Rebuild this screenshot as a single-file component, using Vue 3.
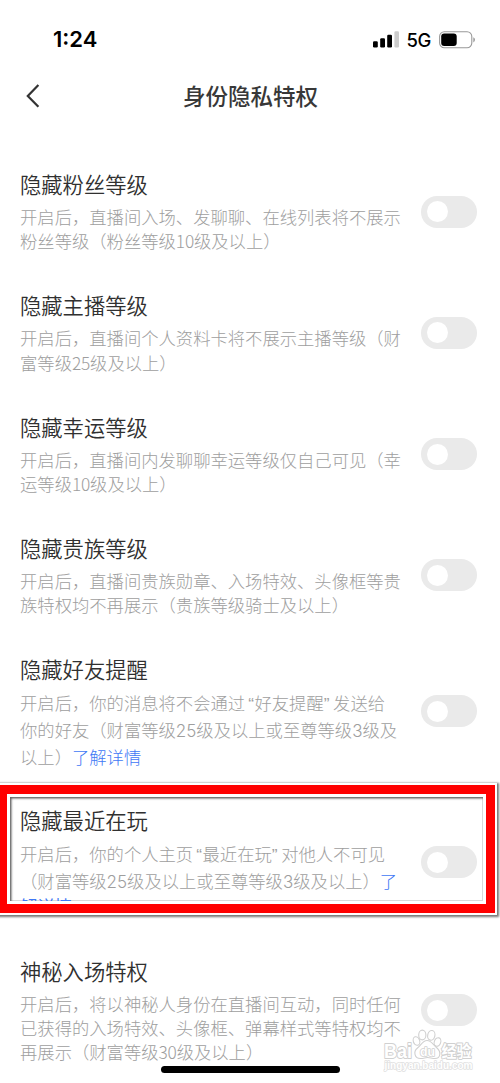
<script setup>
const rows = [
  { title: '隐藏粉丝等级', lines: ['开启后，直播间入场、发聊聊、在线列表将不展示', '粉丝等级（粉丝等级10级及以上）'] },
  { title: '隐藏主播等级', lines: ['开启后，直播间个人资料卡将不展示主播等级（财', '富等级25级及以上）'] },
  { title: '隐藏幸运等级', lines: ['开启后，直播间内发聊聊幸运等级仅自己可见（幸', '运等级10级及以上）'] },
  { title: '隐藏贵族等级', lines: ['开启后，直播间贵族勋章、入场特效、头像框等贵', '族特权均不再展示（贵族等级骑士及以上）'] },
  { title: '隐藏好友提醒', loose: true, lines: ['开启后，你的消息将不会通过“好友提醒”发送给', '你的好友（财富等级25级及以上或至尊等级3级及', '以上）'], links: { 2: '了解详情' } },
  { title: '隐藏最近在玩', loose: true, marked: true, lines: ['开启后，你的个人主页“最近在玩”对他人不可见', '（财富等级25级及以上或至尊等级3级及以上）', ''], links: { 1: '了', 2: '解详情' } },
  { title: '神秘入场特权', last: true, lines: ['开启后，将以神秘人身份在直播间互动，同时任何', '已获得的入场特效、头像框、弹幕样式等特权均不', '再展示（财富等级30级及以上）'] },
]

const kindOf = (text) => {
  if (/\d/.test(text)) return 'num'
  if (text === '“') return 'open'
  if (text === '”') return 'close'
  return 'han'
}
const split = (line) =>
  line.split(/(\d+|[“”])/).filter(Boolean).map((text) => ({ text, kind: kindOf(text) }))
</script>

<template>
  <main class="screen">
    <header class="status">
      <span class="time">1:24</span>
      <div class="signals">
        <svg width="27" height="18" viewBox="0 0 27 18">
          <rect x="0" y="10.2" width="4.8" height="6.3" rx="1.2" />
          <rect x="7.2" y="7.2" width="4.8" height="9.3" rx="1.2" />
          <rect x="14.2" y="3.8" width="4.8" height="12.7" rx="1.2" />
          <rect x="21.4" y="0.2" width="4.6" height="16.3" rx="1.2" fill="#ccc" />
        </svg>
        <span class="net">5G</span>
        <svg width="37" height="18" viewBox="0 0 37 18">
          <rect x="0.6" y="0.7" width="32.2" height="16.1" rx="4.7" fill="none" stroke="#999" stroke-width="1.1" />
          <rect x="2.2" y="2.4" width="15.5" height="12.6" rx="3" />
          <path d="M34.3 6.2 Q36 7 36 8.8 Q36 10.6 34.3 11.4Z" fill="#999" />
        </svg>
      </div>
    </header>

    <nav class="nav">
      <svg class="back" width="16" height="26" viewBox="0 0 16 26">
        <path d="M13.4 2 L2.8 12.9 L13.4 23.8" fill="none" stroke="#333" stroke-width="2.2" />
      </svg>
      <h1>身份隐私特权</h1>
    </nav>

    <section class="list">
      <div v-for="row in rows" :key="row.title" class="row" :class="{ loose: row.loose, last: row.last, marked: row.marked }">
        <div class="copy">
          <h2>{{ row.title }}</h2>
          <p>
            <span v-for="(line, i) in row.lines" :key="i" class="line"><span v-for="(t, k) in split(line)" :key="k" :class="t.kind">{{ t.text }}</span><a v-if="row.links && row.links[i]">{{ row.links[i] }}</a></span>
          </p>
        </div>
        <i class="toggle"><b></b></i>
        <div v-if="row.marked" class="frame"></div>
      </div>
    </section>

    <svg class="watermark" width="94" height="46" viewBox="0 0 94 46">
      <g fill="#fff" stroke="#d0d0d0" stroke-width="1.1">
        <ellipse cx="33.5" cy="12" rx="3.2" ry="4.4" transform="rotate(-18 33.5 12)" />
        <ellipse cx="39.3" cy="6" rx="3.6" ry="4.9" />
        <ellipse cx="48.3" cy="6.3" rx="3.6" ry="4.9" transform="rotate(12 48.3 6.3)" />
        <ellipse cx="54.5" cy="13" rx="3.2" ry="4.4" transform="rotate(20 54.5 13)" />
        <path d="M44 11.5 C39.5 11.5 38 16.5 34.5 19 C30 22.5 31.5 29.5 37.5 29.5 C41 29.5 42 28.5 44.5 28.5 C47 28.5 49 29.5 52 29.5 C57.5 29.5 58.5 23 54 19 C50.5 16 48.5 11.5 44 11.5Z" />
      </g>
      <g fill="#fff" stroke="#d0d0d0" stroke-width="2" paint-order="stroke" stroke-linejoin="round" font-family="'Liberation Sans', 'Noto Sans CJK SC', sans-serif" font-weight="700">
        <text x="1" y="28.5" font-size="20" textLength="28" lengthAdjust="spacingAndGlyphs">Bai</text>
        <text x="37" y="26.5" font-size="13" stroke-width="1.6" textLength="15" lengthAdjust="spacingAndGlyphs">du</text>
        <text x="58.5" y="27.5" font-size="16" textLength="30" lengthAdjust="spacingAndGlyphs">经验</text>
        <text x="1.5" y="40" font-size="10.5" stroke="#e0e0e0" stroke-width="1.6" textLength="88" lengthAdjust="spacingAndGlyphs">jingyan.baidu.com</text>
      </g>
    </svg>
    <div class="home"></div>
  </main>
</template>

<style>
body { margin: 0; background: #fff; }
</style>

<style scoped>
.screen {
  position: relative;
  width: 500px;
  height: 1083px;
  overflow: hidden;
  background: #fff;
  box-sizing: border-box;
  font-family: "Noto Sans CJK SC", sans-serif;
}
.status {
  height: 70px;
  padding: 9px 24px 0 53px;
  box-sizing: border-box;
  display: flex;
  justify-content: space-between;
}
.time {
  font: 600 22px/61px Inter, sans-serif;
}
.signals { display: flex; height: 61px; align-items: center; }
.net { font: 500 18.5px/61px Inter, sans-serif; margin: 1px 8px 0 6.5px; letter-spacing: -0.4px; }
.nav {
  position: relative;
  height: 50px;
  display: flex;
  justify-content: center;
  align-items: center;
}
.back { position: absolute; left: 25px; top: 13px; }
h1 {
  margin: 0 0 0 1px;
  color: #383838;
  font: 500 22.5px/32px "Noto Sans CJK SC", sans-serif;
}
.list { padding: 49px 23px 0 20px; }
.row {
  position: relative;
  height: 85px;
  margin-bottom: 36.3px;
  display: flex;
  justify-content: space-between;
  align-items: center;
}
.loose { height: 114.4px; }
.last { height: 109px; }
.copy { width: 390px; height: 100%; }
h2 {
  margin: 0;
  color: #303030;
  font: 350 21.3px/30px "Noto Sans CJK SC", sans-serif;
}
p {
  margin: 6.2px 0 0;
  color: #9e9e9e;
  font-size: 17.32px;
  font-weight: 300;
}
.line { display: block; height: 24.3px; line-height: 24.3px; white-space: nowrap; }
.num { letter-spacing: -0.2px; }
.loose .num { font-family: Inter, sans-serif; font-size: 17px; letter-spacing: 0; }
.open, .close { font-family: "Liberation Sans", sans-serif; }
.open { margin-left: 3.2px; letter-spacing: 0.4px; }
.close { letter-spacing: 3.6px; }
.loose p { margin-top: 6px; }
.loose .line { height: 26.8px; line-height: 26.8px; }
a { color: #3f78f5; }
.toggle {
  flex: none;
  width: 56px;
  height: 32px;
  box-sizing: border-box;
  padding: 5.5px;
  border-radius: 16px;
  background: #eaeaea;
}
.toggle b {
  display: block;
  width: 21px;
  height: 21px;
  border-radius: 50%;
  background: #fff;
}
.marked .copy {
  position: relative;
  z-index: 1;
  height: 96.5px;
  overflow: hidden;
  align-self: flex-start;
}
.marked .line:last-child { margin-top: -1px; font-weight: 400; }
.frame {
  position: absolute;
  left: -24px;
  top: -22px;
  width: 501px;
  height: 132px;
  box-sizing: border-box;
  border: 2px solid #fff;
  box-shadow: 1px 1px 2px 1px #777;
}
.frame::before {
  content: "";
  position: absolute;
  inset: 0;
  border: 9px solid #f00;
}
.frame::after {
  content: "";
  position: absolute;
  inset: 9px;
  border: 3px solid #fff;
  box-shadow: inset 1.5px 1.5px 2px #666, inset 0 0 0 1px #ddd;
}
.watermark { position: absolute; left: 383px; top: 1029px; }
.home {
  position: absolute;
  left: 161px;
  top: 1066px;
  width: 179px;
  height: 6.5px;
  border-radius: 4px;
  background: #000;
}
</style>
